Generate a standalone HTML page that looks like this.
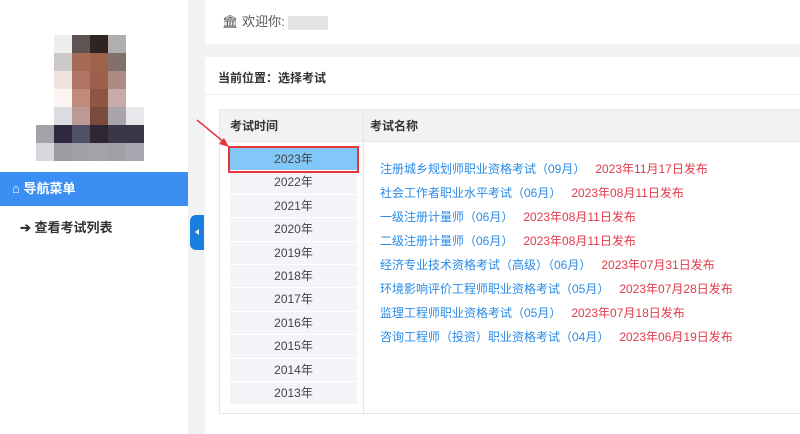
<!DOCTYPE html>
<html><head><meta charset="utf-8"><style>
*{margin:0;padding:0;box-sizing:border-box}
body{width:800px;height:434px;overflow:hidden;background:#f1f2f4;font-family:"Liberation Sans","Noto Sans CJK SC",sans-serif;position:relative;font-size:13px}
.side{position:absolute;left:0;top:0;width:188px;height:434px;background:#fff}
.av{position:absolute;left:36px;top:35px;display:grid;grid-template-columns:repeat(6,18px);grid-template-rows:repeat(7,18px)}
.nav{position:absolute;left:0;top:172px;width:188px;height:34px;background:#3b8ff2;color:#fff;font-weight:bold;font-size:13px;line-height:34px;padding-left:12px}
.item{position:absolute;left:20px;top:217px;font-size:13px;color:#333;font-weight:bold}
.tab{position:absolute;left:190px;top:215px;width:14px;height:35px;background:#1a7ee0;border-radius:6px 0 0 6px}
.tab:after{content:"";position:absolute;left:5px;top:14px;border-right:4px solid #fff;border-top:3px solid transparent;border-bottom:3px solid transparent}
.hdr{position:absolute;left:205px;top:0;width:595px;height:44px;background:#fff;color:#555;font-size:13px;line-height:44px;padding-left:17px}
.card{position:absolute;left:205px;top:57px;width:595px;height:377px;background:#fff}
.bc{position:absolute;left:13px;top:12px;font-size:12px;color:#333;font-weight:bold}
.line{position:absolute;left:0;top:37px;width:595px;height:1px;background:#eee}
.tbl{position:absolute;left:14px;top:52px;width:590px;height:305px;border:1px solid #e6e6e6}
.th{position:absolute;top:0;height:32px;background:#f2f2f2;border-bottom:1px solid #e6e6e6;font-weight:bold;font-size:12px;color:#333;line-height:32px}
.years{position:absolute;left:10px;top:38px;width:127px}
.y{height:23.4px;background:#f2f4f8;border-bottom:1px solid #fff;text-align:center;line-height:23px;color:#444;font-size:12px}
.y.sel{background:#82c7f8;outline:2px solid #e8353a}
.list{position:absolute;left:160px;top:47px;line-height:24px;font-size:12px;white-space:nowrap}
.list a{color:#2a8be6;text-decoration:none}
.list span{color:#e03a4a;margin-left:10px}
</style></head><body>
<div class="side">
<div class="av">
<div></div><div style="background:#eee"></div><div style="background:#5e5453"></div><div style="background:#2e2522"></div><div style="background:#b0aeae"></div><div></div>
<div></div><div style="background:#cdc9c8"></div><div style="background:#a46a56"></div><div style="background:#9c624a"></div><div style="background:#82706a"></div><div></div>
<div></div><div style="background:#f2e3e0"></div><div style="background:#b07565"></div><div style="background:#9e5f4d"></div><div style="background:#ad8a83"></div><div></div>
<div></div><div style="background:#fdf5f3"></div><div style="background:#c28a7a"></div><div style="background:#8e5444"></div><div style="background:#c6aba6"></div><div></div>
<div></div><div style="background:#dcdbe2"></div><div style="background:#bc9a95"></div><div style="background:#7a4a3c"></div><div style="background:#aaa4ab"></div><div style="background:#e8e8ec"></div>
<div style="background:#a3a1a9"></div><div style="background:#2e283c"></div><div style="background:#4e5065"></div><div style="background:#2e2634"></div><div style="background:#3a3848"></div><div style="background:#3a3646"></div>
<div style="background:#d8d8dc"></div><div style="background:#9c9ca2"></div><div style="background:#a0a0a8"></div><div style="background:#a2a2a8"></div><div style="background:#a0a0a6"></div><div style="background:#a8a8b0"></div>
</div>
<div class="nav">⌂ 导航菜单</div>
<div class="item">➔ 查看考试列表</div>
</div>
<div class="tab"></div>
<div class="hdr">🏛 欢迎你: <span style="display:inline-block;width:40px;height:14px;background:#e4e4e4;vertical-align:middle"></span></div>
<div class="card">
<div class="bc">当前位置：选择考试</div>
<div class="line"></div>
<div class="tbl">
<div class="th" style="left:0;width:144px;padding-left:10px;border-right:1px solid #e6e6e6">考试时间</div>
<div class="th" style="left:144px;width:446px;padding-left:6px">考试名称</div>
<div style="position:absolute;left:143px;top:32px;width:1px;height:272px;background:#e6e6e6"></div>
<div class="years">
<div class="y sel">2023年</div><div class="y">2022年</div><div class="y">2021年</div><div class="y">2020年</div><div class="y">2019年</div><div class="y">2018年</div><div class="y">2017年</div><div class="y">2016年</div><div class="y">2015年</div><div class="y">2014年</div><div class="y">2013年</div>
</div>
<div class="list">
<div><a>注册城乡规划师职业资格考试（09月）</a><span>2023年11月17日发布</span></div>
<div><a>社会工作者职业水平考试（06月）</a><span>2023年08月11日发布</span></div>
<div><a>一级注册计量师（06月）</a><span>2023年08月11日发布</span></div>
<div><a>二级注册计量师（06月）</a><span>2023年08月11日发布</span></div>
<div><a>经济专业技术资格考试（高级）（06月）</a><span>2023年07月31日发布</span></div>
<div><a>环境影响评价工程师职业资格考试（05月）</a><span>2023年07月28日发布</span></div>
<div><a>监理工程师职业资格考试（05月）</a><span>2023年07月18日发布</span></div>
<div><a>咨询工程师（投资）职业资格考试（04月）</a><span>2023年06月19日发布</span></div>
</div>
</div>
</div>
<svg style="position:absolute;left:195px;top:118px" width="40" height="32"><line x1="2" y1="2" x2="30" y2="25" stroke="#e8353a" stroke-width="1.5"/><polygon points="34,29 24,26 29,20" fill="#e8353a"/></svg>
</body></html>
